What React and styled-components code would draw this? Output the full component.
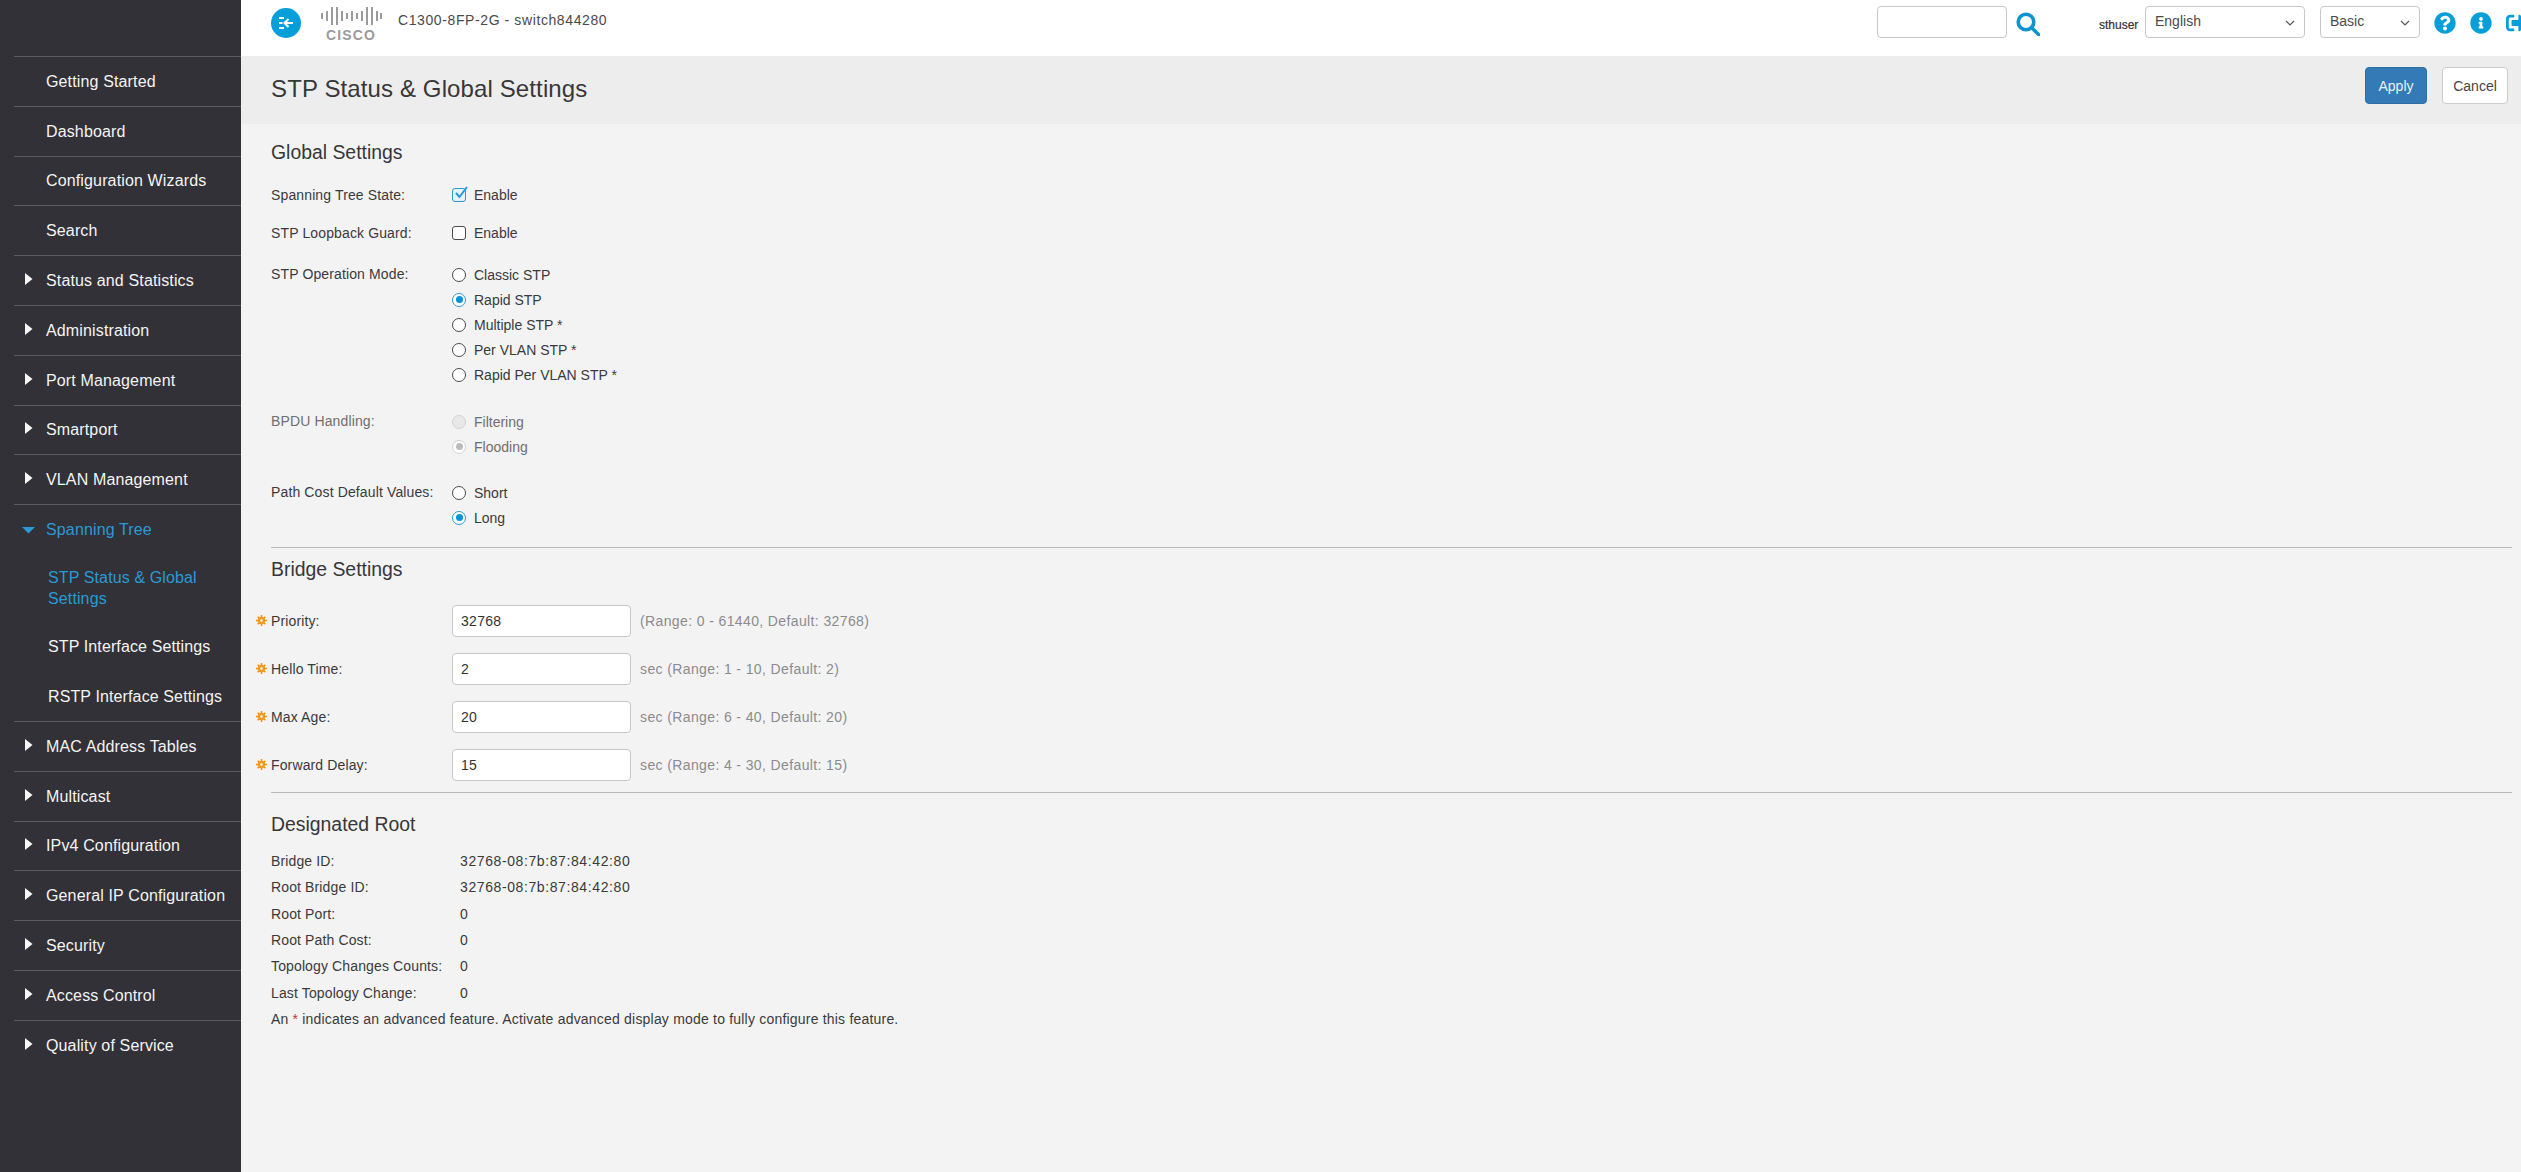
import React from "react";
import styled, { createGlobalStyle } from "styled-components";
import { FaQuestionCircle, FaInfoCircle, FaSignOutAlt } from "react-icons/fa";

const Global = createGlobalStyle`
  html, body { margin: 0; padding: 0; height: 100%; overflow: hidden; }
  body { font-family: "Liberation Sans", Arial, sans-serif; color: #3a3a3c; }
  * { box-sizing: border-box; }
`;

const Page = styled.div`
  display: grid;
  grid-template-columns: 241px 1fr;
  width: 2521px;
  height: 1172px;
  overflow: hidden;
  background: #f3f3f3;
`;

/* sidebar */
const Sidebar = styled.nav`
  background: #323137;
  padding-top: 56px;
  height: 100%;
`;
const NavItem = styled.div`
  height: 49.8px;
  margin-left: 14px;
  border-top: 1px solid #5c5c60;
  display: flex;
  align-items: center;
  padding-top: 1px;
  padding-left: ${(p) => (p.$caret ? "11px" : "32px")};
  font-size: 16px;
  letter-spacing: 0.14px;
  color: ${(p) => (p.$active ? "#2a9ad6" : "#f4f4f4")};
`;
const CaretSlot = styled.span`
  width: 21px;
  display: flex;
  margin-top: ${(p) => (p.$open ? "0" : "-4px")};
  margin-left: ${(p) => (p.$open ? "-3px" : "0")};
  margin-right: ${(p) => (p.$open ? "3px" : "0")};
`;
const SubItem = styled.div`
  height: ${(p) => p.$h}px;
  margin-left: 48px;
  padding-right: 8px;
  display: flex;
  align-items: center;
  font-size: 16px;
  letter-spacing: 0.12px;
  line-height: 21px;
  color: ${(p) => (p.$active ? "#2a9ad6" : "#f4f4f4")};
`;

/* main */
const Main = styled.main`
  display: flex;
  flex-direction: column;
  min-width: 0;
`;
const Header = styled.header`
  height: 56px;
  flex: none;
  background: #fff;
  display: flex;
  align-items: flex-start;
  padding-left: 30px;
  overflow: hidden;
`;
const MenuButton = styled.span`
  margin-top: 8px;
  display: block;
  width: 30px;
  height: 30px;
`;
const Logo = styled.div`
  margin-top: 6px;
  margin-left: 19px;
  width: 62px;
  display: flex;
  flex-direction: column;
  align-items: center;
`;
const LogoWord = styled.span`
  font-family: "Liberation Sans", sans-serif;
  font-weight: 700;
  font-size: 14px;
  line-height: 15px;
  letter-spacing: 1.1px;
  color: #9b9b9d;
  margin-top: 2px;
`;
const DeviceName = styled.span`
  margin-left: 16px;
  margin-top: 11px;
  font-size: 14px;
  line-height: 18px;
  letter-spacing: 0.6px;
  color: #4a4a4c;
`;
const HeaderRight = styled.div`
  margin-left: auto;
  margin-right: -7px;
  display: flex;
  align-items: flex-start;
  padding-top: 6px;
`;
const SearchBox = styled.input`
  width: 130px;
  height: 32px;
  border: 1px solid #c8c8c8;
  border-radius: 4px;
  background: #fff;
`;
const SearchIcon = styled.svg`
  margin-left: 9px;
  margin-top: 6px;
  width: 24px;
  height: 24px;
`;
const User = styled.span`
  margin-left: 59px;
  width: 46px;
  font-size: 12px;
  line-height: 38px;
  color: #333;
  -webkit-text-stroke: 0.2px #333;
`;
const Select = styled.div`
  width: ${(p) => p.$w}px;
  margin-right: ${(p) => p.$mr}px;
  height: 32px;
  border: 1px solid #c8c8c8;
  border-radius: 4px;
  background: #fff;
  padding: 0 9px;
  display: flex;
  align-items: center;
  justify-content: space-between;
  font-size: 14px;
  color: #4a4a4c;
  padding-bottom: 2px;
`;
const Chevron = styled.svg`
  width: 10px;
  height: 6px;
  margin-top: 3px;
`;
const TopIcon = styled.span`
  display: flex;
  width: 22px;
  height: 24px;
  margin-right: ${(p) => p.$mr}px;
  margin-top: 6px;
  color: #049fd9;
  font-size: 22px;
`;

const TitleBar = styled.div`
  height: 68px;
  flex: none;
  background: #ededed;
  padding: 11px 13px 0 30px;
  display: flex;
  align-items: flex-start;
  justify-content: space-between;
`;
const Title = styled.h1`
  margin: 0;
  font-weight: 400;
  font-size: 24px;
  line-height: 44px;
  letter-spacing: 0.12px;
  color: #37373a;
`;
const Buttons = styled.div`
  display: flex;
  gap: 15px;
`;
const Button = styled.button`
  height: 37px;
  width: ${(p) => p.$w}px;
  border-radius: 4px;
  border: 1px solid ${(p) => (p.$primary ? "#2e6da4" : "#ccc")};
  background: ${(p) => (p.$primary ? "#337ab7" : "#fff")};
  color: ${(p) => (p.$primary ? "#e8f3fb" : "#444")};
  font-family: inherit;
  font-size: 14px;
  padding: 0;
`;

const Content = styled.div`
  flex: 1;
  padding: 13px 9px 0 30px;
  font-size: 14px;
  letter-spacing: 0.13px;
  color: #3a3a3c;
`;
const SectionTitle = styled.h2`
  margin: ${(p) => p.$mt || 0}px 0 0;
  font-weight: 400;
  font-size: 19.4px;
  line-height: 30px;
  letter-spacing: 0;
  color: #37373a;
`;
const Row = styled.div`
  display: grid;
  grid-template-columns: 181px 1fr;
  margin-top: ${(p) => p.$mt}px;
  color: ${(p) => (p.$disabled ? "#6f6f72" : "inherit")};
`;
const RowLabel = styled.div`
  line-height: 24px;
`;
const Options = styled.div`
  display: flex;
  flex-direction: column;
  letter-spacing: 0;
`;
const Option = styled.div`
  height: ${(p) => p.$h || 25}px;
  display: flex;
  align-items: center;
  gap: 8px;
`;
const CheckBox = styled.span`
  position: relative;
  display: block;
  width: 14px;
  height: 14px;
  border: 1.3px solid ${(p) => (p.$on ? "#2a9ad6" : "#4b4b4e")};
  border-radius: 3px;
  background: ${(p) => (p.$on ? "#e6f2f9" : "#fff")};
`;
const CheckMark = styled.svg`
  position: absolute;
  left: 0;
  top: -4px;
  width: 16px;
  height: 16px;
`;
const Radio = styled.span`
  display: flex;
  align-items: center;
  justify-content: center;
  width: 14px;
  height: 14px;
  border-radius: 50%;
  border: 1.3px solid ${(p) => (p.$disabled ? "#d2d2d2" : p.$on ? "#2a9ad6" : "#4b4b4e")};
  background: ${(p) => (p.$disabled && !p.$on ? "#e8e8e8" : "#fff")};
  &::after {
    content: "";
    display: ${(p) => (p.$on ? "block" : "none")};
    width: 7px;
    height: 7px;
    border-radius: 50%;
    background: ${(p) => (p.$disabled ? "#bdbdbd" : "#0a94d6")};
  }
`;
const Divider = styled.hr`
  margin: ${(p) => p.$mt}px 0 0;
  border: 0;
  border-top: 1px solid #b9b9bb;
`;
const InputRow = styled.div`
  display: grid;
  grid-template-columns: 181px 179px 1fr;
  align-items: center;
  height: 32px;
  margin-top: ${(p) => p.$mt}px;
`;
const RequiredLabel = styled.div`
  position: relative;
`;
const RequiredMark = styled.svg`
  position: absolute;
  left: -15.5px;
  top: 2px;
  width: 11px;
  height: 11px;
`;
const TextBox = styled.input`
  width: 179px;
  height: 32px;
  border: 1px solid #c8c8c8;
  border-radius: 4px;
  background: #fff;
  padding: 0 8px;
  font-family: inherit;
  font-size: 14px;
  letter-spacing: 0.3px;
  color: #333;
`;
const Hint = styled.span`
  margin-left: 9px;
  letter-spacing: 0.38px;
  color: #8b8b8d;
`;
const Info = styled.div`
  display: grid;
  grid-template-columns: 189px 1fr;
  height: 26.3px;
  align-items: center;
  margin-top: ${(p) => p.$mt || 0}px;
`;
const InfoValue = styled.span`
  letter-spacing: 0.6px;
`;
const Note = styled.div`
  height: 26.3px;
  display: flex;
  align-items: center;
  white-space: pre;
  letter-spacing: 0.2px;
`;
const Asterisk = styled.span`
  color: #c0392b;
  margin: 0 4px;
`;

const Caret = ({ open }) => (
  <CaretSlot $open={open}>
    {open ? (
      <svg width="13" height="7" viewBox="0 0 13 7"><path d="M0 0h13L6.5 6.5z" fill="#2a9ad6" /></svg>
    ) : (
      <svg width="8" height="12" viewBox="0 0 8 12"><path d="M0 0l7.5 6L0 12z" fill="#f7f7f7" /></svg>
    )}
  </CaretSlot>
);

const bars = [
  [2, 6], [7, 10], [12, 16], [17, 16], [22, 10], [27, 6], [32, 10], [37, 6], [42, 10], [47, 16], [52, 16], [57, 10], [61, 6],
];

const top = ["Getting Started", "Dashboard", "Configuration Wizards", "Search"];
const before = ["Status and Statistics", "Administration", "Port Management", "Smartport", "VLAN Management"];
const after = ["MAC Address Tables", "Multicast", "IPv4 Configuration", "General IP Configuration", "Security", "Access Control", "Quality of Service"];

const Required = () => (
  <RequiredMark viewBox="0 0 10 10">
    <g stroke="#ef8a0a" strokeWidth="1.3">
      <path d="M5 0v10M0 5h10M1.5 1.5l7 7M8.5 1.5l-7 7" />
    </g>
    <circle cx="5" cy="5" r="3.3" fill="#f29a1f" />
    <circle cx="5" cy="5" r="1.2" fill="#fff2d8" />
  </RequiredMark>
);

const fields = [
  ["Priority:", "32768", "(Range: 0 - 61440, Default: 32768)", 21],
  ["Hello Time:", "2", "sec (Range: 1 - 10, Default: 2)", 16],
  ["Max Age:", "20", "sec (Range: 6 - 40, Default: 20)", 16],
  ["Forward Delay:", "15", "sec (Range: 4 - 30, Default: 15)", 16],
];
const infos = [
  ["Bridge ID:", "32768-08:7b:87:84:42:80"],
  ["Root Bridge ID:", "32768-08:7b:87:84:42:80"],
  ["Root Port:", "0"],
  ["Root Path Cost:", "0"],
  ["Topology Changes Counts:", "0"],
  ["Last Topology Change:", "0"],
];

export default function App() {
  return (
    <Page>
      <Global />
      <Sidebar>
        {top.map((t) => <NavItem key={t}>{t}</NavItem>)}
        {before.map((t) => <NavItem key={t} $caret><Caret />{t}</NavItem>)}
        <NavItem $caret $active><Caret open />Spanning Tree</NavItem>
        <SubItem $h={68} $active>STP Status &amp; Global<br />Settings</SubItem>
        <SubItem $h={50}>STP Interface Settings</SubItem>
        <SubItem $h={49}>RSTP Interface Settings</SubItem>
        {after.map((t) => <NavItem key={t} $caret><Caret />{t}</NavItem>)}
      </Sidebar>
      <Main>
        <Header>
          <MenuButton>
            <svg width="30" height="30" viewBox="0 0 30 30">
              <circle cx="15" cy="15" r="15" fill="#049fd9" />
              <path d="M8 10h5M8 15h3.5M8 20h5M22 15h-8M17.5 11l-4 4 4 4" fill="none" stroke="#fff" strokeWidth="2" />
            </svg>
          </MenuButton>
          <Logo>
            <svg width="62" height="20" viewBox="0 0 62 20">
              {bars.map(([x, h], i) => (
                <rect key={i} x={x - 1} y={10 - h / 2 - (h > 14 ? 1 : 0)} width="2" height={h + (h > 14 ? 2 : 0)} fill="#9b9b9d" />
              ))}
            </svg>
            <LogoWord>CISCO</LogoWord>
          </Logo>
          <DeviceName>C1300-8FP-2G - switch844280</DeviceName>
          <HeaderRight>
            <SearchBox aria-label="search" />
            <SearchIcon viewBox="0 0 24 24">
              <circle cx="10" cy="10" r="7.8" fill="none" stroke="#0d94d0" strokeWidth="3.6" />
              <path d="M15.5 15.5L22.5 22.5" stroke="#0d94d0" strokeWidth="3.6" strokeLinecap="round" />
            </SearchIcon>
            <User>sthuser</User>
            <Select $w={160} $mr={15}>English<Chevron viewBox="0 0 10 6"><path d="M1 1l4 4 4-4" fill="none" stroke="#555" strokeWidth="1.2" /></Chevron></Select>
            <Select $w={100} $mr={14}>Basic<Chevron viewBox="0 0 10 6"><path d="M1 1l4 4 4-4" fill="none" stroke="#555" strokeWidth="1.2" /></Chevron></Select>
            <TopIcon $mr={14}><FaQuestionCircle /></TopIcon>
            <TopIcon $mr={14}><FaInfoCircle /></TopIcon>
            <TopIcon $mr={0}><FaSignOutAlt /></TopIcon>
          </HeaderRight>
        </Header>
        <TitleBar>
          <Title>STP Status &amp; Global Settings</Title>
          <Buttons>
            <Button $primary $w={62}>Apply</Button>
            <Button $w={66}>Cancel</Button>
          </Buttons>
        </TitleBar>
        <Content>
          <SectionTitle>Global Settings</SectionTitle>
          <Row $mt={16}>
            <RowLabel>Spanning Tree State:</RowLabel>
            <Options>
              <Option $h={24}>
                <CheckBox $on>
                  <CheckMark viewBox="0 0 16 16"><path d="M3 8l3.5 4L14 2" fill="none" stroke="#2a9ad6" strokeWidth="2" /></CheckMark>
                </CheckBox>
                Enable
              </Option>
            </Options>
          </Row>
          <Row $mt={14}>
            <RowLabel>STP Loopback Guard:</RowLabel>
            <Options><Option $h={24}><CheckBox />Enable</Option></Options>
          </Row>
          <Row $mt={17}>
            <RowLabel>STP Operation Mode:</RowLabel>
            <Options>
              <Option><Radio />Classic STP</Option>
              <Option><Radio $on />Rapid STP</Option>
              <Option><Radio />Multiple STP *</Option>
              <Option><Radio />Per VLAN STP *</Option>
              <Option><Radio />Rapid Per VLAN STP *</Option>
            </Options>
          </Row>
          <Row $mt={22} $disabled>
            <RowLabel>BPDU Handling:</RowLabel>
            <Options>
              <Option><Radio $disabled />Filtering</Option>
              <Option><Radio $disabled $on />Flooding</Option>
            </Options>
          </Row>
          <Row $mt={21}>
            <RowLabel>Path Cost Default Values:</RowLabel>
            <Options>
              <Option><Radio />Short</Option>
              <Option><Radio $on />Long</Option>
            </Options>
          </Row>
          <Divider $mt={17} />
          <SectionTitle $mt={6}>Bridge Settings</SectionTitle>
          {fields.map(([l, v, h, mt]) => (
            <InputRow key={l} $mt={mt}>
              <RequiredLabel><Required />{l}</RequiredLabel>
              <TextBox readOnly value={v} />
              <Hint>{h}</Hint>
            </InputRow>
          ))}
          <Divider $mt={11} />
          <SectionTitle $mt={16}>Designated Root</SectionTitle>
          {infos.map(([l, v], i) => (
            <Info key={l} $mt={i === 0 ? 9 : 0}><span>{l}</span><InfoValue>{v}</InfoValue></Info>
          ))}
          <Note>An<Asterisk>*</Asterisk>indicates an advanced feature. Activate advanced display mode to fully configure this feature.</Note>
        </Content>
      </Main>
    </Page>
  );
}
